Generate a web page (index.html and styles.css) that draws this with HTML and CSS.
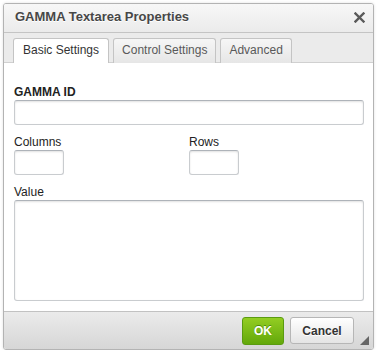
FILE: index.html
```html
<!DOCTYPE html>
<html>
<head>
<meta charset="utf-8">
<link rel="stylesheet" href="styles.css">
</head>
<body>
<div class="dialog">
  <div class="titlebar">
    <span class="title">GAMMA Textarea Properties</span>
    <svg class="close" width="11" height="11" viewBox="0 0 11 11"><path d="M1.5 1.5 L9.5 9.5 M9.5 1.5 L1.5 9.5" stroke="#5a5a5a" stroke-width="2.4" stroke-linecap="square"/></svg>
  </div>
  <div class="tabs">
    <div class="tab active">Basic Settings</div>
    <div class="tab">Control Settings</div>
    <div class="tab">Advanced</div>
  </div>
  <div class="content">
    <label class="lbl bold">GAMMA ID</label>
    <div class="input wide"></div>
    <div class="pair">
      <div class="field">
        <label class="lbl">Columns</label>
        <div class="input small"></div>
      </div>
      <div class="field">
        <label class="lbl">Rows</label>
        <div class="input small"></div>
      </div>
    </div>
    <label class="lbl">Value</label>
    <div class="input area"></div>
  </div>
  <div class="footer">
    <div class="btn ok">OK</div>
    <div class="btn cancel">Cancel</div>
    <div class="grip"></div>
  </div>
</div>
</body>
</html>
```
FILE: styles.css
```css
html, body {
  margin: 0;
  padding: 0;
  background: #ffffff;
}
body {
  font-family: "Liberation Sans", Arial, sans-serif;
  color: #222;
}
.dialog {
  position: relative;
  margin: 3px 0 0 3px;
  width: 371px;
  height: 347px;
  box-sizing: border-box;
  border: 1px solid #b3b3b3;
  border-radius: 3px;
  display: flex;
  flex-direction: column;
  overflow: hidden;
  box-shadow: 0 0 3px rgba(0,0,0,0.12);
}
.titlebar {
  flex: none;
  display: flex;
  align-items: center;
  justify-content: space-between;
  padding: 0 8px 2px 11px;
  box-sizing: border-box;
  height: 29px;
  border-bottom: 1px solid #c4c4c4;
  background: linear-gradient(#f7f7f7, #ebebeb);
}
.title {
  font-size: 13px;
  font-weight: bold;
  color: #474747;
  line-height: 16px;
  text-shadow: 0 1px 0 #fff;
}
.close {
  display: block;
  margin-top: 1px;
}
.tabs {
  flex: none;
  display: flex;
  gap: 4px;
  padding: 5px 0 0 9px;
  height: 30px;
  box-sizing: border-box;
  background: #ebebeb;
  border-bottom: 1px solid #d0d0d0;
}
.tab {
  height: 25px;
  box-sizing: border-box;
  padding: 0 8px 2px;
  line-height: 22px;
  font-size: 12px;
  color: #595959;
  border: 1px solid #c4c4c4;
  border-bottom: none;
  border-radius: 3px 3px 0 0;
  background: linear-gradient(#f6f6f6, #e6e6e6);
  margin-bottom: -1px;
}
.tab.active {
  background: #ffffff;
  color: #333;
  padding-left: 9px;
  padding-right: 9px;
  height: 26px;
}
.content {
  flex: 1;
  background: #ffffff;
  padding: 22px 9px 0 10px;
  display: flex;
  flex-direction: column;
}
.lbl {
  display: block;
  font-size: 12px;
  line-height: 14px;
  margin-bottom: 1px;
  color: #222;
}
.lbl.bold {
  font-weight: bold;
}
.input {
  box-sizing: border-box;
  height: 25px;
  border: 1px solid #c9cccf;
  border-top-color: #aeb3b9;
  border-radius: 3px;
  background: #fff;
  box-shadow: inset 0 1px 2px rgba(0,0,0,0.12);
}
.wide {
  width: 350px;
  margin-bottom: 10px;
}
.pair {
  display: grid;
  grid-template-columns: 175px 175px;
  margin-bottom: 10px;
}
.small {
  width: 50px;
}
.area {
  width: 350px;
  height: 101px;
}
.footer {
  flex: none;
  height: 38px;
  box-sizing: border-box;
  border-top: 1px solid #c2c2c2;
  background: linear-gradient(#ebebeb, #d6d6d6);
  display: flex;
  justify-content: flex-end;
  align-items: flex-start;
  gap: 6px;
  padding: 5px 19px 0 0;
}
.btn {
  box-sizing: border-box;
  height: 28px;
  line-height: 26px;
  font-size: 12px;
  font-weight: bold;
  text-align: center;
  border-radius: 3px;
}
.ok {
  width: 42px;
  color: #ffffff;
  background: linear-gradient(#93cd22, #63a80b);
  border: 1px solid #5a9b10;
  text-shadow: 0 -1px 0 #4f8a0c;
}
.cancel {
  width: 64px;
  height: 27px;
  color: #333;
  background: linear-gradient(#ffffff, #e4e4e4);
  border: 1px solid #b6b6b6;
  text-shadow: 0 1px 0 #fff;
}
.grip {
  position: absolute;
  right: 4px;
  bottom: 4px;
  width: 0;
  height: 0;
  border-style: solid;
  border-width: 0 0 9px 9px;
  border-color: transparent transparent #666 transparent;
}
```
